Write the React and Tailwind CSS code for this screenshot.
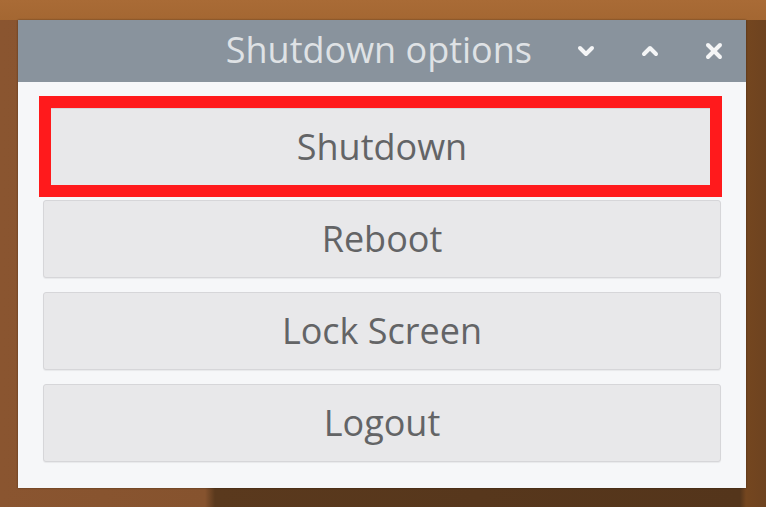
import { ChevronDown, ChevronUp, X } from 'lucide-react';

const opciones = ['Shutdown', 'Reboot', 'Lock Screen', 'Logout'];

const BotonOpcion = ({ label, selected }) => (
    <div className="relative">
        <button className="w-full h-[78px] rounded-[3px] border border-[#d6d6d9] bg-[#e8e8ea] text-[36px] leading-none text-[#636466] shadow-[0_1px_1px_rgba(0,0,0,0.06)]">
            {label}
        </button>
        {selected && (
            <div className="absolute left-[-4px] right-[-1px] top-[-12px] bottom-[-11px] border-[12px] border-[#ff1a1c]"></div>
        )}
    </div>
);

const App = () => {
    return (
        <div
            className="w-[766px] h-[507px] overflow-hidden pt-[20px] pl-[18px] bg-[linear-gradient(180deg,#a96b36_0px,#a46732_20px,transparent_20px),linear-gradient(90deg,#8a5530_0px,#86532e_205px,#5a391d_215px,#54351b_740px,#74461f_746px,#6e4320_766px)]"
            style={{ fontFamily: '"Open Sans", "Noto Sans", sans-serif' }}
        >
            <div className="w-[728px] h-[468px] flex flex-col shadow-[0_0_2px_rgba(0,0,0,0.4)]">
                {/* barra de título */}
                <div className="h-[62px] bg-[#89939d] flex items-center justify-end pr-[20px]">
                    <span className="text-[36px] leading-none text-[#dfe2e5] mr-[42px] mb-[2px]">Shutdown options</span>
                    <div className="flex items-center gap-[40px] text-[#f4f5f6]">
                        <ChevronDown size={24} strokeWidth={4} />
                        <ChevronUp size={24} strokeWidth={4} />
                        <X size={24} strokeWidth={4} />
                    </div>
                </div>
                {/* opciones */}
                <div className="flex-1 bg-[#f6f7f9] px-[25px] pt-[26px] flex flex-col gap-[14px]">
                    {opciones.map((op, idx) => (
                        <BotonOpcion key={idx} label={op} selected={idx === 0} />
                    ))}
                </div>
            </div>
        </div>
    );
};

export default App;
